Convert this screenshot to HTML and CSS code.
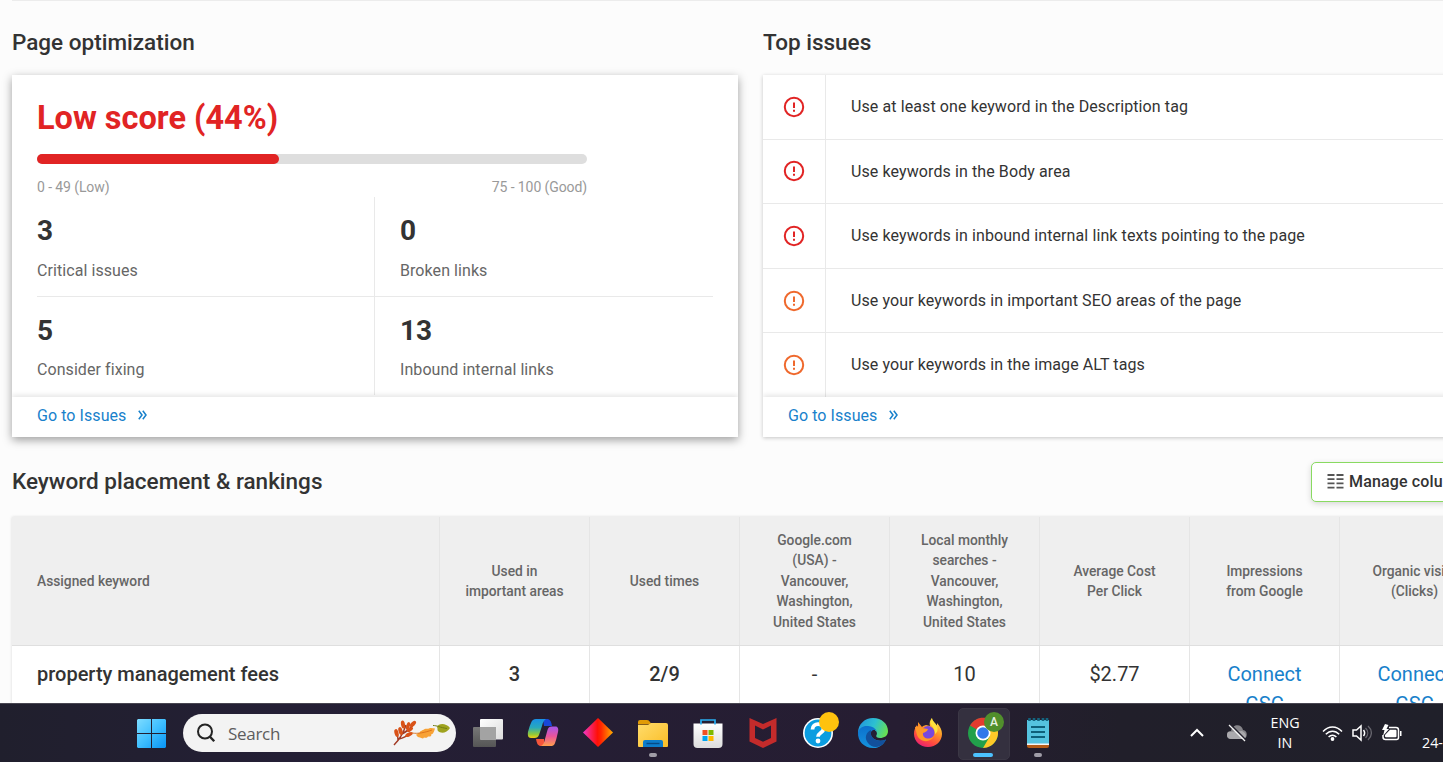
FILE: index.html
```html
<!DOCTYPE html>
<html lang="en">
<head>
<meta charset="utf-8">
<title>Page optimization</title>
<link rel="stylesheet" href="styles.css">
</head>
<body>
<div class="screen">
<main class="page">
  <div class="rule"></div>
  <div class="panels">
    <section class="col-left">
      <h2 class="title">Page optimization</h2>
      <div class="card card-raised">
        <div class="score-area">
          <div class="score">Low score (44%)</div>
          <div class="bar"><div class="fill" style="width:44%"></div></div>
          <div class="scale"><span>0 - 49 (Low)</span><span>75 - 100 (Good)</span></div>
          <div class="stats">
            <div class="stat"><b>3</b><span>Critical issues</span></div>
            <div class="stat"><b>0</b><span>Broken links</span></div>
            <div class="stat"><b>5</b><span>Consider fixing</span></div>
            <div class="stat"><b>13</b><span>Inbound internal links</span></div>
          </div>
        </div>
        <div class="foot"><a class="link">Go to Issues</a><svg class="more" width="10" height="10" viewBox="0 0 10 10"><path d="M.8.8 4 5 .8 9.200M4.800.8 8 5 4.800 9.200"/></svg></div>
      </div>
    </section>
    <section class="col-right">
      <h2 class="title">Top issues</h2>
      <div class="card">
        <div class="issues">
          <div class="issue critical"><div class="mark"><svg width="22" height="22" viewBox="0 0 22 22"><circle cx="11" cy="11" r="9.200"/><path d="M11 6.500v5.500M11 13.800v1.900"/></svg></div><p>Use at least one keyword in the Description tag</p></div>
          <div class="issue critical"><div class="mark"><svg width="22" height="22" viewBox="0 0 22 22"><circle cx="11" cy="11" r="9.200"/><path d="M11 6.500v5.500M11 13.800v1.900"/></svg></div><p>Use keywords in the Body area</p></div>
          <div class="issue critical"><div class="mark"><svg width="22" height="22" viewBox="0 0 22 22"><circle cx="11" cy="11" r="9.200"/><path d="M11 6.500v5.500M11 13.800v1.900"/></svg></div><p>Use keywords in inbound internal link texts pointing to the page</p></div>
          <div class="issue warn"><div class="mark"><svg width="22" height="22" viewBox="0 0 22 22"><circle cx="11" cy="11" r="9.200"/><path d="M11 6.500v5.500M11 13.800v1.900"/></svg></div><p>Use your keywords in important SEO areas of the page</p></div>
          <div class="issue warn"><div class="mark"><svg width="22" height="22" viewBox="0 0 22 22"><circle cx="11" cy="11" r="9.200"/><path d="M11 6.500v5.500M11 13.800v1.900"/></svg></div><p>Use your keywords in the image ALT tags</p></div>
        </div>
        <div class="foot"><a class="link">Go to Issues</a><svg class="more" width="10" height="10" viewBox="0 0 10 10"><path d="M.8.8 4 5 .8 9.200M4.800.8 8 5 4.800 9.200"/></svg></div>
      </div>
    </section>
  </div>
  <div class="table-head">
    <h2 class="title">Keyword placement &amp; rankings</h2>
    <div class="manage"><svg width="17" height="15" viewBox="0 0 17 15"><path d="M.5 1h7M9.500 1h7M.5 5.200h7M9.500 5.200h7M.5 9.400h7M9.500 9.400h7M.5 13.600h7M9.500 13.600h7"/></svg><span>Manage columns</span></div>
  </div>
  <div class="table">
    <div class="row header">
      <div>Assigned keyword</div>
      <div>Used in<br>important areas</div>
      <div>Used times</div>
      <div>Google.com<br>(USA) -<br>Vancouver,<br>Washington,<br>United States</div>
      <div>Local monthly<br>searches -<br>Vancouver,<br>Washington,<br>United States</div>
      <div>Average Cost<br>Per Click</div>
      <div>Impressions<br>from Google</div>
      <div>Organic visits<br>(Clicks)</div>
    </div>
    <div class="row data">
      <div>property management fees</div>
      <div class="strong">3</div>
      <div class="strong">2/9</div>
      <div>-</div>
      <div>10</div>
      <div>$2.77</div>
      <div><a class="link">Connect<br>GSC</a></div>
      <div><a class="link">Connect<br>GSC</a></div>
    </div>
  </div>
</main>

<footer class="taskbar">
  <svg class="start" width="29" height="29" viewBox="0 0 29 29">
    <defs><linearGradient id="win" gradientUnits="userSpaceOnUse" x1="0" y1="0" x2="29" y2="29"><stop offset="0" stop-color="#7edcff"/><stop offset=".5" stop-color="#3fbfff"/><stop offset="1" stop-color="#0794f5"/></linearGradient></defs>
    <path fill="url(#win)" d="M1 0h13v14H0V1zM15 0h13l1 1v13H15zM0 15h14v14H1l-1-1zM15 15h14v13l-1 1H15z"/>
  </svg>
  <div class="search">
    <svg width="22" height="22" viewBox="0 0 22 22" fill="none" stroke="#242424" stroke-width="2"><circle cx="10" cy="9.500" r="7"/><path d="m15 14.800 4.200 4.500" stroke-width="2.400"/></svg>
    <span>Search</span>
    <svg class="leaves" width="58" height="28" viewBox="0 0 58 28">
      <path d="M1 26C7 20 10 15 13 6M6 20c5-1 8-3 11-6M9 15c4-2 8-5 11-9M5 21c0-4 0-6-2-10" fill="none" stroke="#a23b25" stroke-width="1.500"/>
      <g fill="#d95218"><ellipse cx="10" cy="5.500" rx="2" ry="4" transform="rotate(-10 10 5.500)"/><ellipse cx="15" cy="7" rx="1.800" ry="4" transform="rotate(18 15 7)"/><ellipse cx="20" cy="5" rx="2" ry="3.800" transform="rotate(45 20 5)"/><ellipse cx="3.500" cy="14" rx="2" ry="4" transform="rotate(-15 3.500 14)"/><ellipse cx="7.500" cy="12" rx="2" ry="4" transform="rotate(-15 7.500 12)"/><ellipse cx="17" cy="10.500" rx="1.700" ry="3.500" transform="rotate(55 17 10.500)"/><ellipse cx="16" cy="15.500" rx="1.900" ry="4" transform="rotate(65 16 15.500)"/></g>
      <path d="M23 15.500c2 0 2-2 4-2 0-2 3-2 4-3 1-1.500 3 0 5-1 2-1 4 0 6 0l-1 3c-1 1 0 2-3 3 1 2-1 2-3 2-1 2-3 1-4 1-1 2-3 0-4 0-2 0-3-1-4-3z" fill="#f8a235"/><path d="M19 14c6 1 13-.5 20-3" stroke="#d96e18" stroke-width=".9" fill="none"/>
      <path d="M44 8c1-3 8-5 13 1-3 5-9 6-12 3-1-1 0-2-1-4z" fill="#9fa31f"/><path d="M40 6.500c4 0 7 2 14 3" stroke="#717d12" stroke-width="1" fill="none"/>
    </svg>
  </div>
  <div class="apps">
    <div class="app"><svg width="32" height="32" viewBox="0 0 32 32">
      <defs><linearGradient id="tv" x1="0" y1="0" x2="1" y2="1"><stop offset="0" stop-color="#fff"/><stop offset="1" stop-color="#dcdcdc"/></linearGradient><linearGradient id="tg" x1="0" y1="0" x2="0" y2="1"><stop offset="0" stop-color="#777"/><stop offset="1" stop-color="#555"/></linearGradient></defs>
      <rect x="1" y="10" width="23" height="20" rx="1" fill="url(#tg)"/><rect x="8" y="2" width="23" height="20.500" rx="1" fill="url(#tv)"/><path d="M8 10h16v12.500H8z" fill="#a3a3a3"/></svg></div>
    <div class="app"><svg width="32" height="32" viewBox="0 0 32 32">
      <defs><linearGradient id="ca" x1="0" y1="0" x2="0" y2="1"><stop offset="0" stop-color="#198fe6"/><stop offset=".45" stop-color="#28a9bd"/><stop offset=".8" stop-color="#8fc83a"/><stop offset="1" stop-color="#f2ce13"/></linearGradient><linearGradient id="cb" x1="0" y1="0" x2="0" y2="1"><stop offset="0" stop-color="#a657ec"/><stop offset=".5" stop-color="#e9549a"/><stop offset="1" stop-color="#ffa04c"/></linearGradient></defs>
      <path d="M16 2h4c3 0 4 2 5 7h-8z" fill="#1847d8"/><path d="M17 29h-3c-3 0-4-2-5-7h8z" fill="#f5553b"/>
      <path d="M9 2h10c-2 1-3 3-4 7l-3 9c-.8 2-2 3-4.500 3H4c-3 0-3.500-3-3-6 1-4 2-7 3-9 1.200-3 2.500-4 5-4z" fill="url(#ca)"/>
      <path d="M24 29H14c2-1 3-3 4-7l2.500-9c.7-2.500 2-3.500 4.500-3.500h3.500c2.500 0 3.200 2.500 2.500 5.500-1 4-1.500 7-2.500 9.500C27.500 28 26.500 29 24 29z" fill="url(#cb)"/></svg></div>
    <div class="app"><svg width="32" height="32" viewBox="0 0 32 32"><defs><linearGradient id="di"><stop offset="0" stop-color="#f038c8"/><stop offset=".48" stop-color="#ff1008"/><stop offset=".6" stop-color="#ff2600"/><stop offset="1" stop-color="#ffac00"/></linearGradient></defs><path d="m16 1 15 14.500L16 30 1 15.500z" fill="url(#di)"/></svg></div>
    <div class="app running"><svg width="32" height="32" viewBox="0 0 32 32"><defs><linearGradient id="fo" x1="0" y1="0" x2="1" y2="1"><stop offset="0" stop-color="#ffdc6c"/><stop offset="1" stop-color="#fbbd25"/></linearGradient></defs><path d="M1 5q0-2 2-2h7q2 0 3 2l1.500 2.500H1z" fill="#e19b06"/><path d="M1 8h10l3-2h15q2 0 2 2v21q0 1-1 1H2q-1 0-1-1z" fill="url(#fo)"/><path d="M6 30v-5q0-2 2-2h16q2 0 2 2v5z" fill="#0d7dca"/><path d="M9.500 26.500h13" stroke="#064b85" stroke-width="1.400"/></svg></div>
    <div class="app"><svg width="32" height="32" viewBox="0 0 32 32"><defs><linearGradient id="st" x1="0" y1="0" x2="0" y2="1"><stop offset="0" stop-color="#fff"/><stop offset="1" stop-color="#ddd"/></linearGradient></defs><path d="M1.500 6.500h29V27q0 4-4 4h-21q-4 0-4-4z" fill="url(#st)"/><path d="M9 7.500V3h14v4.500" fill="none" stroke="#28aef2" stroke-width="1.700"/><path d="M10.500 13h5v5h-5z" fill="#f25022"/><path d="M16.500 13h5v5h-5z" fill="#7fba00"/><path d="M10.500 19h5v5h-5z" fill="#00a4ef"/><path d="M16.500 19h5v5h-5z" fill="#ffb900"/></svg></div>
    <div class="app"><svg width="32" height="32" viewBox="0 0 32 32"><path d="m2.500 1 13.500 6L29.500 1v23.500L16 31 2.500 24.500zM8 8.500V21l8 3.700 8-3.700V8.500l-8 4z" fill="#c42b2b" fill-rule="evenodd"/></svg></div>
    <div class="app"><svg class="help" width="38" height="38" viewBox="0 0 38 38"><circle cx="16" cy="22" r="15" fill="#fff"/><circle cx="16" cy="22" r="13.400" fill="#0b9de0"/><path d="M10.500 18.500c0-7 11-7 11-.8 0 4-5.500 4-5.500 8" fill="none" stroke="#fff" stroke-width="3.800"/><circle cx="16" cy="30" r="2.400" fill="#fff"/><circle cx="27" cy="11" r="10" fill="#ffc20e"/></svg></div>
    <div class="app"><svg width="32" height="32" viewBox="0 0 32 32"><defs><linearGradient id="ea" x1="0" y1=".3" x2="1" y2=".6"><stop offset="0" stop-color="#2296dc"/><stop offset=".5" stop-color="#2cc0d2"/><stop offset="1" stop-color="#68e050"/></linearGradient><linearGradient id="eb" x1="0" y1="0" x2="0" y2="1"><stop offset="0" stop-color="#0c70cd"/><stop offset="1" stop-color="#1593dd"/></linearGradient></defs>
      <path d="M1 16C1 7 8 1 16 1c9 0 15 6 15 13 0 5-4 7-8 7-3 0-4-1-4-3l-1-5c-4-5-13-3-17 3z" fill="url(#ea)"/>
      <path d="M1 15.500C2 11 6 8.500 11 9c4 .3 7.500 2 9 5.500-3-3-6-1-6 2 0 6 8 9 15 6-3 6-8 9-13 8.500C7 31 .5 24 1 15.500z" fill="url(#eb)"/>
      <path d="M14 13c-5 2-7 8-3 13 3 4 8 5 12 3 3-1.500 5-4 6-6.500-7 3-14 0-15-5z" fill="#12509c"/><circle cx="17" cy="16.500" r="2.900" fill="#241f35"/></svg></div>
    <div class="app"><svg width="32" height="32" viewBox="0 0 32 32"><defs><linearGradient id="ff" x1=".8" y1="0" x2=".3" y2="1"><stop offset="0" stop-color="#fff04a"/><stop offset=".4" stop-color="#ff9a26"/><stop offset=".75" stop-color="#ff4940"/><stop offset="1" stop-color="#e82073"/></linearGradient></defs><path d="M16 30C8 30 2 24 2 17c0-4 1-6 3-9l1 3V5l4 5c1-1 2-1.500 4-2l4 1c-1-3 0-6 2-8 0 4 3 5 5 8V6c3 3 5 7 5 11 0 7-6 13-14 13z" fill="url(#ff)"/><circle cx="16" cy="15.500" r="6.500" fill="#7948dc"/><path d="M3 10c4-1 5-1 7 1l6 1c-1 3-3 3-5 4-1 5 6 8 11 3-3 7-14 7-17-1z" fill="#ff9826"/><path d="M20 1c-2 3-2 6 0 8s3 5 3 8c3-2 3-5 2-8-1-3-5-5-5-8z" fill="#ffe13c"/></svg></div>
    <div class="app active"><svg class="chrome" width="38" height="38" viewBox="0 0 38 38"><circle cx="16" cy="22" r="15" fill="#22a04b"/><path d="M16 22 3 14.500C9 4 23 4 29 14.500z" fill="#e33b2e"/><path d="M16 15h13c6 10-2 22-13 22l7-12z" fill="#ffc928"/><circle cx="16" cy="22" r="7.500" fill="#fff"/><circle cx="16" cy="22" r="5.800" fill="#3078ea"/><circle cx="27" cy="11" r="10" fill="#518f2c"/><text x="27" y="15.300" text-anchor="middle" class="avatar">A</text></svg></div>
    <div class="app running"><svg width="32" height="32" viewBox="0 0 32 32"><path d="M5 24h22v5q0 2-2 2H7q-2 0-2-2z" fill="#b55c18"/><path d="M5 26h22v2H5z" fill="#f5f5f5"/><path d="M5 3h22v23.500H5z" fill="#55c3df"/><path d="M7.500 1v3M12 1v3M16.500 1v3M21 1v3M25 1v3" stroke="#13647f" stroke-width="2.600"/><path d="M9 10h14M9 15h14M9 20h14" stroke="#0e607a" stroke-width="1.800"/></svg></div>
  </div>
  <div class="tray">
    <svg class="chev" width="16" height="12" viewBox="0 0 16 12"><path d="m2 9 6-6 6 6" fill="none" stroke="#fff" stroke-width="2"/></svg>
    <svg class="cloud" width="22" height="18" viewBox="0 0 22 18"><path d="M5 15a4 4 0 0 1 0-8C7-1 16 0 17 6c5 0 5 9 0 9z" fill="#858489"/><path d="m2 8 14-1c5 2 5 7 1 8H5c-4 0-5-4-3-7z" fill="#aaa9ad"/><path d="m4.500.5 15 15" stroke="#24222e" stroke-width="1.500"/><path d="m3 1 16 16" stroke="#f5f5f5" stroke-width="1.300"/></svg>
    <div class="lang">ENG<br>IN</div>
    <svg class="wifi" width="21" height="17" viewBox="0 0 21 17"><g fill="none" stroke="#fff" stroke-width="1.500"><path d="M1 6.500c5.500-6 13.500-6 19 0"/><path d="M3.800 9.300c4-4.200 9.400-4.200 13.400 0"/><path d="M6.600 12c2.400-2.500 5.400-2.500 7.800 0"/></g><circle cx="10.500" cy="14" r="1.900" fill="#fff"/></svg>
    <svg class="sound" width="20" height="18" viewBox="0 0 20 18" fill="none"><path d="M1 6h3.500L9 2v14l-4.500-4H1z" stroke="#fff" stroke-width="1.500"/><path d="M11.500 6c1.500 2 1.500 4 0 6" stroke="#fff" stroke-width="1.500"/><path d="M13.500 4c3 3 3 7 0 10M16 2c4.500 4 4.500 10 0 14" stroke="#66656d" stroke-width="1.300"/></svg>
    <svg class="battery" width="21" height="18" viewBox="0 0 21 18"><path d="M8 3.500h7q2.500 0 2.500 2.500v7.500q0 2-2 2h-11q-2.500 0-2.500-2.500v-2" fill="none" stroke="#fff" stroke-width="1.500"/><path d="M19 7h1.500v5H19zM9 5.800h5.500q1 0 1 1v5.500q0 1-1 1H5q-1 0-1-1V11z" fill="#fff"/><path d="m4 0-3 6h2.500L2 12l6-7H5.500L7.500 1z" fill="#fff"/></svg>
    <div class="date">24-10-2024</div>
  </div>
</footer>
</div>
</body>
</html>
```
FILE: styles.css
```css
* { box-sizing: border-box; }
body { margin: 0; font-family: Roboto, "Liberation Sans", sans-serif; color: #333; background: #fcfcfc; overflow: hidden; }
.screen { width: 1443px; height: 762px; display: flex; flex-direction: column; overflow: hidden; }
.page { height: 703px; flex: none; padding-left: 12px; overflow: hidden; }
.rule { height: 1px; background: #ececec; }
.panels { display: flex; gap: 25px; }
.col-left { width: 726px; flex: none; }
.col-right { width: 726px; flex: none; }
.title { margin: 0; font-size: 22.500px; line-height: 30px; font-weight: 500; white-space: nowrap; }
.panels .title { padding-top: 26px; height: 74px; }
.card { height: 362px; background: #fff; display: flex; flex-direction: column; box-shadow: 0 1px 4px rgba(0,0,0,.22); }
.card-raised { box-shadow: 0 3px 9px rgba(0,0,0,.38); }
.score-area { height: 322px; padding: 22px 25px 0; flex: none; }
.score { font-size: 32.500px; line-height: 42px; font-weight: 700; color: #e12424; }
.bar { margin-top: 15px; width: 550px; height: 10px; border-radius: 5px; background: #dedede; }
.fill { height: 10px; border-radius: 5px; background: #e12424; }
.scale { width: 550px; height: 33px; padding-top: 13px; display: flex; justify-content: space-between; font-size: 14px; line-height: 20px; letter-spacing: -.1px; color: #999; }
.stats { display: grid; grid-template-columns: 337px 339px; grid-template-rows: 100px 98px; }
.stat { padding: 17px 0 0 25px; border-left: 1px solid #e9e9e9; display: flex; flex-direction: column; }
.stat:nth-child(odd) { padding-left: 0; border-left: 0; }
.stat:nth-child(-n+2) { border-bottom: 1px solid #e9e9e9; }
.stat b { font-size: 28px; line-height: 34px; height: 46px; font-weight: 700; }
.stat:nth-child(-n+2) b { height: 47px; }
.stat span { font-size: 16px; line-height: 20px; letter-spacing: .07px; color: #666; }
.foot { position: relative; height: 40px; padding: 0 0 3px 25px; display: flex; align-items: center; gap: 12px; background: #fff; font-size: 16px; letter-spacing: .07px; box-shadow: 0 -2px 5px rgba(0,0,0,.1); clip-path: inset(-9px 0 0 0); }
.link { color: #1881cb; }
.more { margin-bottom: 2px; fill: none; stroke: #1881cb; stroke-width: 1.500; }
.issues { height: 322px; flex: none; overflow: hidden; }
.issue { height: 64.600px; display: flex; border-bottom: 1px solid #e9e9e9; }
.mark { width: 63px; border-right: 1px solid #e9e9e9; display: flex; align-items: center; justify-content: center; }
.issue p { margin: 0; padding: 0 0 0 25px; font-size: 16px; line-height: 63px; letter-spacing: .1px; }
.issue svg { fill: none; stroke-width: 2; }
.critical svg { stroke: #e12424; }
.warn svg { stroke: #ef692d; }
.table-head { height: 80px; display: flex; justify-content: space-between; padding-top: 25px; }
.table-head .title { padding-top: 4px; }
.manage { width: 190px; height: 40px; flex: none; margin-right: -58px; border: 1px solid #89da61; border-radius: 5px; padding: 0 0 2px 15px; display: flex; align-items: center; gap: 5px; font-size: 16px; letter-spacing: .15px; font-weight: 500; background: #fff; box-shadow: 0 2px 6px rgba(0,0,0,.15); }
.manage svg { stroke: #555; stroke-width: 1.800; }
.table { width: 1478px; box-shadow: 0 0 3px rgba(0,0,0,.14); }
.row { display: grid; grid-template-columns: 428px repeat(7, 150px); }
.row > div { border-right: 1px solid #e5e5e5; display: flex; justify-content: center; text-align: center; }
.row > div:first-child { justify-content: flex-start; padding-left: 25px; }
.header { height: 129px; background: #efefef; border-bottom: 1px solid #dfdfdf; color: #666; font-size: 13.800px; line-height: 20.500px; font-weight: 500; }
.header > div { align-items: center; }
.data { height: 90px; background: #fff; font-size: 20px; line-height: 30px; }
.data > div { padding-top: 13px; }
.data > div:first-child, .strong { font-weight: 500; }

.taskbar { height: 59px; flex: none; display: flex; align-items: center; padding: 0 0 0 137px; background: linear-gradient(90deg, #201f2d 0, #241f35 280px, #261d32 900px, #211f2a 1120px, #20202a 100%); border-top: 1px solid #484651; }
.start { flex: none; }
.search { width: 273px; height: 38px; flex: none; margin-left: 17px; padding-left: 12px; border-radius: 19px; background: #f3f3f3; display: flex; align-items: center; font: 17px "Open Sans", sans-serif; letter-spacing: -.3px; color: #5d5d5d; }
.search span { width: 176px; padding-left: 11px; }
.apps { height: 56px; display: flex; margin-left: 4px; }
.app { position: relative; width: 55px; display: flex; align-items: center; justify-content: center; }
.help, .chrome { position: relative; left: 3px; top: -3px; }
.running::after { content: ""; position: absolute; left: 24px; bottom: 4px; width: 8px; height: 4px; border-radius: 2px; background: #a09da7; }
.active::before { content: ""; position: absolute; left: 3px; top: 3px; width: 50px; height: 50px; border-radius: 5px; background: #34303f; border: 1px solid #3b3745; }
.active::after { content: ""; position: absolute; left: 18px; bottom: 4px; width: 20px; height: 4px; border-radius: 2px; background: #4cc2ff; }
.avatar { font: 500 12px Roboto, sans-serif; fill: #e9f1e4; }
.tray { display: flex; align-items: center; margin-left: 124px; color: #fff; font: 14.300px/20px "Open Sans", sans-serif; flex: none; }
.cloud { margin-left: 21px; }
.lang { width: 40px; margin-left: 17px; text-align: center; }
.wifi { margin-left: 17px; }
.sound { margin-left: 9px; }
.battery { margin-left: 9px; }
.date { margin: 19px 0 0 20px; white-space: nowrap; }
```
